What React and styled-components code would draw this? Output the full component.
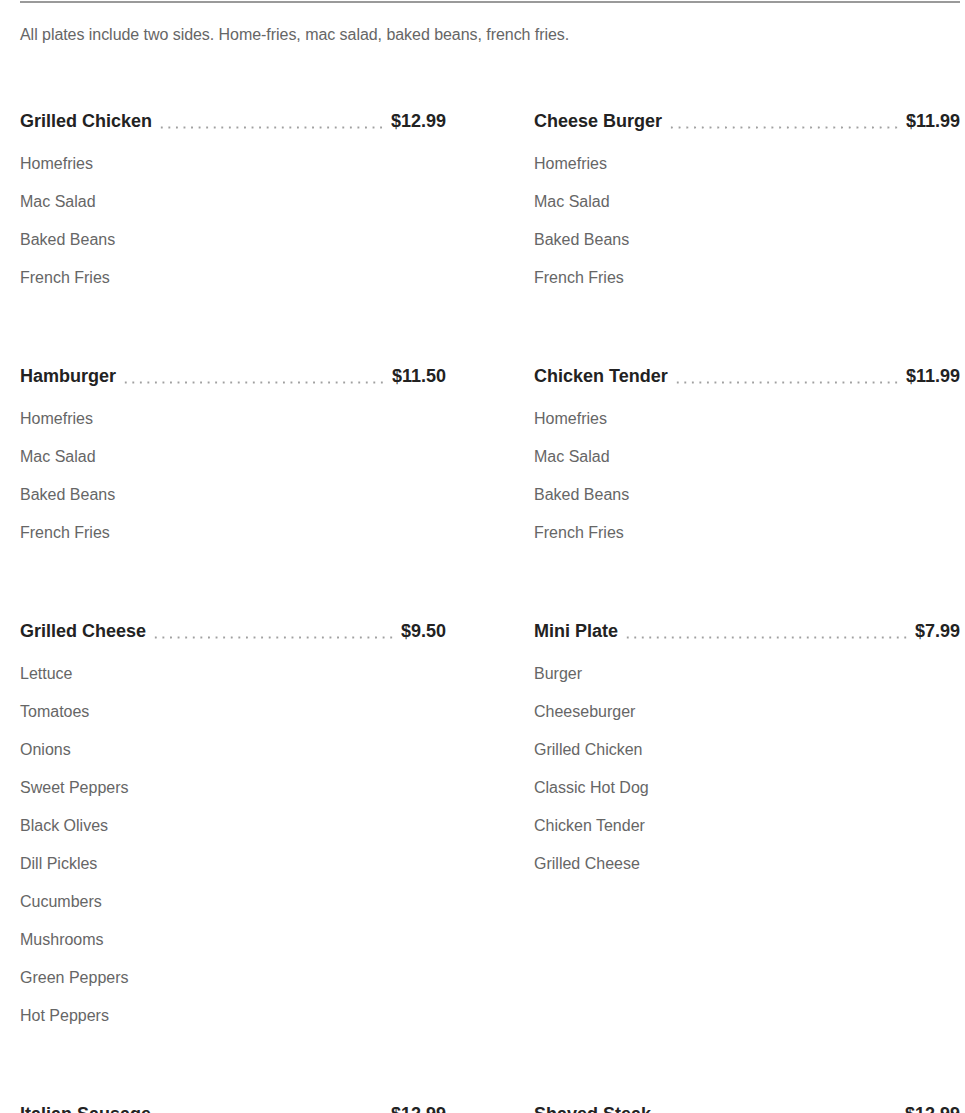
import styled, { createGlobalStyle } from 'styled-components';

const GlobalStyle = createGlobalStyle`
  body {
    margin: 0;
    background: #fff;
    font-family: "Liberation Sans", Arial, sans-serif;
  }
`;

const plateSides = ['Homefries', 'Mac Salad', 'Baked Beans', 'French Fries'];

const plates = [
  { name: 'Grilled Chicken', price: '$12.99', sides: plateSides },
  { name: 'Cheese Burger', price: '$11.99', sides: plateSides },
  { name: 'Hamburger', price: '$11.50', sides: plateSides },
  { name: 'Chicken Tender', price: '$11.99', sides: plateSides },
  {
    name: 'Grilled Cheese',
    price: '$9.50',
    sides: [
      'Lettuce',
      'Tomatoes',
      'Onions',
      'Sweet Peppers',
      'Black Olives',
      'Dill Pickles',
      'Cucumbers',
      'Mushrooms',
      'Green Peppers',
      'Hot Peppers'
    ]
  },
  {
    name: 'Mini Plate',
    price: '$7.99',
    sides: ['Burger', 'Cheeseburger', 'Grilled Chicken', 'Classic Hot Dog', 'Chicken Tender', 'Grilled Cheese']
  },
  { name: 'Italian Sausage', price: '$12.99', sides: plateSides },
  { name: 'Shaved Steak', price: '$12.99', sides: plateSides }
];

export default function App () {
  return (
    <>
      <GlobalStyle />
      <Menu>
        <Rule />
        <Intro>All plates include two sides. Home-fries, mac salad, baked beans, french fries.</Intro>
        <Grid>
          {plates.map(plate => (
            <Plate key={plate.name}>
              <TitleRow>
                <Name>{plate.name}</Name>
                <Leader />
                <Price>{plate.price}</Price>
              </TitleRow>
              <Sides>
                {plate.sides.map(side => (
                  <Side key={side}>{side}</Side>
                ))}
              </Sides>
            </Plate>
          ))}
        </Grid>
      </Menu>
    </>
  );
}

const Menu = styled.div`
  width: 940px;
  margin-left: 20px;
  padding-top: 1px;
`;

const Rule = styled.hr`
  margin: 0;
  border: 0;
  height: 2px;
  background: #9a9a9a;
`;

const Intro = styled.p`
  margin: 20px 0 0;
  font-size: 16px;
  line-height: 24px;
  color: #666;
  letter-spacing: -0.05px;
`;

const Grid = styled.div`
  display: grid;
  grid-template-columns: 1fr 1fr;
  column-gap: 88px;
  row-gap: 67px;
  margin-top: 62px;
  align-items: start;
`;

const Plate = styled.section``;

const TitleRow = styled.div`
  display: flex;
  align-items: stretch;
  height: 24px;
  font-size: 18px;
  line-height: 24px;
  font-weight: 700;
  color: #222;
`;

const Name = styled.h3`
  margin: 0;
  font-size: inherit;
  white-space: nowrap;
`;

const Leader = styled.span`
  flex: 1;
  margin: 0 6px;
  background-image: radial-gradient(circle at center, #a0a0a0 0.9px, transparent 1.3px);
  background-size: 7.5px 3px;
  background-position: left 0 top 17px;
  background-repeat: space no-repeat;
`;

const Price = styled.span`
  white-space: nowrap;
`;

const Sides = styled.ul`
  list-style: none;
  margin: 12px 0 0;
  padding: 0;
`;

const Side = styled.li`
  padding: 7px 0;
  font-size: 16px;
  line-height: 24px;
  color: #666;
`;
